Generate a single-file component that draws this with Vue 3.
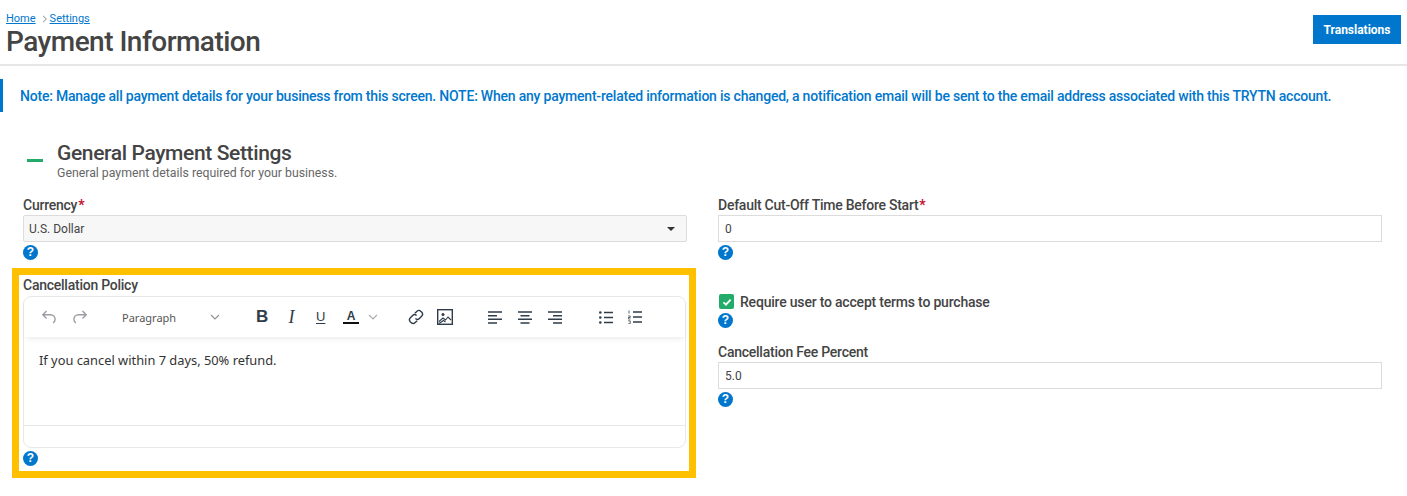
<script setup>
</script>

<template>
  <div class="page">
    <header class="head">
      <div class="head-left">
        <nav class="crumbs">
          <a class="crumb">Home</a>
          <svg class="crumb-sep" viewBox="0 0 6 8" width="6" height="8"><path d="M1 .8 4.400 4 1 7.200" fill="none" stroke="#8a8a8a" stroke-width="1"/></svg>
          <a class="crumb">Settings</a>
        </nav>
        <h1 class="title">Payment Information</h1>
      </div>
      <button class="translate">Translations</button>
    </header>

    <div class="note">Note: Manage all payment details for your business from this screen. NOTE: When any payment-related information is changed, a notification email will be sent to the email address associated with this TRYTN account.</div>

    <section class="section">
      <div class="section-head">
        <span class="dash"></span>
        <div>
          <h2 class="section-title">General Payment Settings</h2>
          <p class="section-sub">General payment details required for your business.</p>
        </div>
      </div>

      <div class="cols">
        <div class="col">
          <label class="label">Currency<span class="req">*</span></label>
          <div class="field select">
            <span>U.S. Dollar</span>
            <span class="caret"></span>
          </div>
          <span class="help">?</span>

          <div class="highlight">
            <label class="label policy-label">Cancellation Policy</label>
            <div class="editor">
              <div class="toolbar">
                <svg class="ic" viewBox="0 0 16 16" width="16" height="16"><path d="M5.500 2 1.800 5.700l3.700 3.700M2 5.700h7.500a4.600 4.600 0 0 1 4.600 4.600c0 1.600-.8 2.900-2 3.700" fill="none" stroke="#9a9ea3" stroke-width="1.400"/></svg>
                <svg class="ic ic-redo" viewBox="0 0 16 16" width="16" height="16"><path d="M10.500 2l3.700 3.700-3.700 3.700M14 5.700H6.500a4.600 4.600 0 0 0-4.600 4.600c0 1.600.8 2.900 2 3.700" fill="none" stroke="#9a9ea3" stroke-width="1.400"/></svg>
                <span class="para">Paragraph</span>
                <svg class="chev chev-para" viewBox="0 0 10 6" width="10" height="6"><path d="M1 1l4 4 4-4" fill="none" stroke="#8f9499" stroke-width="1.200"/></svg>
                <span class="tl tl-b">B</span>
                <span class="tl tl-i">I</span>
                <span class="tl tl-u">U</span>
                <span class="tl tl-a">A</span>
                <svg class="chev chev-a" viewBox="0 0 10 6" width="10" height="6"><path d="M1 1l4 4 4-4" fill="none" stroke="#a9adb1" stroke-width="1.200"/></svg>
                <svg class="ic ic-link" viewBox="0 0 16 16" width="16" height="16"><g fill="none" stroke="#2f3d4a" stroke-width="1.400"><path d="M6.900 4.300 8.800 2.400a2.900 2.900 0 0 1 4.100 0l.7.700a2.900 2.900 0 0 1 0 4.100l-2.200 2.200a2.900 2.900 0 0 1-4 .1"/><path d="M9.100 11.700l-1.900 1.900a2.900 2.900 0 0 1-4.100 0l-.7-.7a2.900 2.900 0 0 1 0-4.100l2.200-2.200a2.900 2.900 0 0 1 4-.1"/></g></svg>
                <svg class="ic ic-img" viewBox="0 0 16 16" width="16" height="16"><rect x=".7" y=".7" width="14.600" height="14.600" fill="none" stroke="#2f3d4a" stroke-width="1.400"/><circle cx="6" cy="5.500" r="1.500" fill="#2f3d4a"/><path d="M2 12.500l4-3.500 2.500 2L11 8l3 3M2 14.500l4.500-3 2 1.500" fill="none" stroke="#2f3d4a" stroke-width="1.100"/></svg>
                <svg class="ic ic-al1" viewBox="0 0 14 13" width="14" height="13"><path d="M0 1h14M0 4.700h9M0 8.300h14M0 12h9" stroke="#2f3d4a" stroke-width="1.400"/></svg>
                <svg class="ic ic-al2" viewBox="0 0 14 13" width="14" height="13"><path d="M0 1h14M2.500 4.700h9M0 8.300h14M2.500 12h9" stroke="#2f3d4a" stroke-width="1.400"/></svg>
                <svg class="ic ic-al3" viewBox="0 0 14 13" width="14" height="13"><path d="M0 1h14M5 4.700h9M0 8.300h14M5 12h9" stroke="#2f3d4a" stroke-width="1.400"/></svg>
                <svg class="ic ic-ul" viewBox="0 0 14 13" width="14" height="13"><circle cx="1.300" cy="1.500" r="1.300" fill="#2f3d4a"/><circle cx="1.300" cy="6.500" r="1.300" fill="#2f3d4a"/><circle cx="1.300" cy="11.500" r="1.300" fill="#2f3d4a"/><path d="M5 1.500h9M5 6.500h9M5 11.500h9" stroke="#2f3d4a" stroke-width="1.400"/></svg>
                <svg class="ic ic-ol" viewBox="0 0 14 14" width="14" height="14"><path d="M1 .5v3M.2 6h2v1.500H.4v1.500h2M.2 10.800h2v3H.2" fill="none" stroke="#2f3d4a" stroke-width=".8"/><path d="M5 2h9M5 7h9M5 12h9" stroke="#2f3d4a" stroke-width="1.400"/></svg>
              </div>
              <div class="body">If you cancel within 7 days, 50% refund.</div>
              <div class="foot"></div>
            </div>
            <span class="help help-policy">?</span>
          </div>
        </div>

        <div class="col">
          <label class="label">Default Cut-Off Time Before Start<span class="req">*</span></label>
          <div class="field">0</div>
          <span class="help">?</span>

          <div class="check-row">
            <span class="check">
              <svg viewBox="0 0 14 14" width="14" height="14"><path d="M3.500 7.300 6 9.700l4.600-5" fill="none" stroke="#fff" stroke-width="1.800"/></svg>
            </span>
            <span class="check-label">Require user to accept terms to purchase</span>
          </div>
          <span class="help">?</span>

          <label class="label fee-label">Cancellation Fee Percent</label>
          <div class="field">5.0</div>
          <span class="help">?</span>
        </div>
      </div>
    </section>
  </div>
</template>

<style>
html, body { margin: 0; background: #fff; }
</style>

<style scoped>
.page {
  width: 1407px;
  height: 496px;
  overflow: hidden;
  font-family: Roboto, "Liberation Sans", sans-serif;
  color: #444;
  box-sizing: border-box;
}
.head {
  height: 66px;
  box-sizing: border-box;
  border-bottom: 2px solid #e6e6e6;
  padding: 12px 6px 0 6px;
  display: flex;
  justify-content: space-between;
  align-items: flex-start;
}
.crumbs { display: flex; align-items: center; height: 13px; font-size: 11px; }
.crumb { color: #0077cc; text-decoration: underline; }
.crumb-sep { margin: 0 2px 0 6px; }
.title {
  margin: 0;
  font-size: 28px;
  letter-spacing: -0.52px;
  line-height: 34px;
  font-weight: 500;
  color: #444;
}
.translate {
  margin-top: 3px;
  width: 88px;
  height: 29px;
  border: 0;
  padding: 0;
  background: #0077cc;
  color: #fff;
  font: 700 12px Roboto, sans-serif;
}
.note {
  margin-top: 13px;
  height: 33px;
  box-sizing: border-box;
  border-left: 3px solid #0077cc;
  padding-left: 17px;
  line-height: 34px;
  font-size: 14px;
  letter-spacing: -0.213px;
  font-weight: 500;
  color: #0077cc;
  white-space: nowrap;
}
.section { padding: 29px 25px 0 23px; }
.section-head { display: flex; align-items: flex-start; }
.dash {
  width: 16px;
  height: 3px;
  margin: 18px 14px 0 4px;
  background: #23ab6a;
}
.section-title {
  margin: 0;
  font-size: 21px;
  letter-spacing: -0.37px;
  line-height: 24px;
  font-weight: 500;
  color: #444;
}
.section-sub {
  margin: 0;
  font-size: 12.3px;
  line-height: 16px;
  color: #666;
}
.cols {
  margin-top: 16px;
  display: grid;
  grid-template-columns: 664px 664px;
  column-gap: 31px;
}
.col { display: flex; flex-direction: column; align-items: flex-start; }
.label {
  display: block;
  height: 17px;
  line-height: 17px;
  font-size: 14px;
  letter-spacing: -0.25px;
  font-weight: 500;
  color: #444;
}
.req { color: #c8102e; margin-left: 1px; font-weight: 700; }
.field {
  width: 100%;
  height: 27px;
  margin-top: 1px;
  box-sizing: border-box;
  border: 1px solid #dcdcdc;
  background: #fff;
  padding: 0 6px;
  line-height: 26px;
  font-size: 12px;
  color: #444;
}
.select {
  background: #f7f7f7;
  border-radius: 2px;
  padding: 0 5px;
  display: flex;
  justify-content: space-between;
  align-items: center;
}
.caret {
  width: 0;
  height: 0;
  margin-right: 6px;
  border-left: 4px solid transparent;
  border-right: 4px solid transparent;
  border-top: 4px solid #333;
}
.help {
  width: 15px;
  height: 15px;
  margin-top: 3px;
  border-radius: 50%;
  background: #0077cc;
  color: #fff;
  font: 700 12px/15px "Liberation Sans", sans-serif;
  text-align: center;
  flex: none;
}
.highlight {
  margin: 8px -9px 0 -11px;
  width: 684px;
  height: 210px;
  box-sizing: border-box;
  border: 7px solid #ffc000;
  padding: 1px 0 0 4px;
}
.policy-label { height: 20px; line-height: 18px; }
.editor {
  width: 663px;
  height: 152px;
  box-sizing: border-box;
  border: 1px solid #e8e8e8;
  border-radius: 8px;
  display: flex;
  flex-direction: column;
}
.toolbar {
  height: 40px;
  flex: none;
  box-sizing: border-box;
  padding-left: 17px;
  display: flex;
  align-items: center;
  box-shadow: 0 3px 6px -2px rgba(0, 0, 0, 0.1);
  color: #2f3d4a;
}
.ic, .chev { flex: none; display: block; }
.ic-redo { margin-left: 15px; }
.para { margin-left: 34px; font-size: 11px; color: #555; font-family: "Noto Sans", sans-serif; width: 88px; }
.chev-para { margin-right: 36px; }
.tl { flex: none; line-height: 18px; font-family: "Liberation Sans", sans-serif; color: #2f3d4a; }
.tl-b { font-weight: 700; font-size: 17px; width: 12px; }
.tl-i { font-family: "Liberation Serif", serif; font-style: italic; font-size: 18px; margin-left: 19px; width: 9px; text-align: center; }
.tl-u { font-size: 13px; margin-left: 20px; text-decoration: underline; text-underline-offset: 2px; width: 11px; }
.tl-a { font-size: 12px; font-weight: 700; margin-left: 16px; width: 16px; text-align: center; border-bottom: 2px solid #111; line-height: 12px; height: 12px; }
.chev-a { margin-left: 9px; }
.ic-link { margin-left: 30px; }
.ic-img { margin-left: 13px; }
.ic-al1 { margin-left: 35px; }
.ic-al2 { margin-left: 16px; }
.ic-al3 { margin-left: 16px; }
.ic-ul { margin-left: 37px; }
.ic-ol { margin-left: 15px; }
.body {
  flex: 1;
  padding: 14px 15px 0 15px;
  font-family: "Noto Sans", sans-serif;
  font-size: 12.85px;
  line-height: 18px;
  color: #333;
  border-bottom: 1px solid #e8e8e8;
}
.foot { height: 21px; flex: none; }
.help-policy { margin-top: 3px; display: block; }
.check-row {
  margin-top: 33px;
  height: 17px;
  display: flex;
  align-items: center;
}
.check {
  width: 15px;
  height: 15px;
  margin: 0 6px 0 1px;
  border-radius: 2px;
  background: #23ab6a;
  display: flex;
  align-items: center;
  justify-content: center;
}
.check-label { font-size: 14px; letter-spacing: -0.2px; font-weight: 500; color: #444; }
.fee-label { margin-top: 16px; }
</style>
